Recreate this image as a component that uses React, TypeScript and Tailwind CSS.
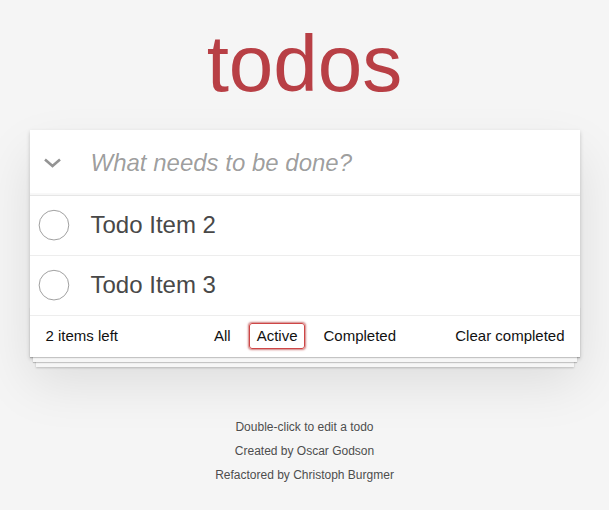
import React from "react";

function Circle() {
  return (
    <svg width="40" height="40" viewBox="-10 -18 100 135" className="shrink-0">
      <circle cx="50" cy="50" r="50" fill="none" stroke="#949494" strokeWidth="3" />
    </svg>
  );
}

export default function App() {
  const items = ["Todo Item 2", "Todo Item 3"];
  return (
    <div className="min-h-screen bg-[#f5f5f5] font-['Liberation_Sans',Arial,sans-serif] text-[14px] text-[#111111] antialiased">
      <div className="w-[550px] mx-auto pt-[24px] pb-[40px]">
        <h1 className="h-[80px] text-[80px] leading-[80px] font-extralight text-center text-[#b83f45] mb-[26px]">
          todos
        </h1>
        <section className="bg-white shadow-[0_2px_4px_0_rgba(0,0,0,0.2),0_25px_50px_0_rgba(0,0,0,0.1)]">
          <header className="relative flex items-center h-[65px] shadow-[inset_0_-2px_1px_rgba(0,0,0,0.03)]">
            <div className="w-[60px] h-[65px] flex items-center justify-center shrink-0">
              <svg width="20" height="12" viewBox="0 0 20 12" className="ml-[-13px] mt-[1px]">
                <polyline points="2,2.5 9.5,9 17,2.5" fill="none" stroke="#949494" strokeWidth="2.6" strokeLinejoin="miter" />
              </svg>
            </div>
            <input
              className="flex-1 h-[65px] pl-[1px] pr-[16px] text-[24px] leading-[1.4] bg-transparent outline-none placeholder:italic placeholder:text-[rgba(0,0,0,0.4)] text-[#484848]"
              placeholder="What needs to be done?"
            />
          </header>
          <ul className="border-t border-[#e6e6e6]">
            {items.map((t) => (
              <li key={t} className="flex items-center border-b border-[#ededed] pl-[1px]">
                <Circle />
                <label className="pl-[20px] pr-[15px] py-[15px] text-[24px] leading-[1.2] text-[#484848]">{t}</label>
              </li>
            ))}
          </ul>
          <footer className="relative h-[41px] px-[15px] py-[10px] text-[15px]">
            <div className="absolute inset-x-0 bottom-0 h-[50px] overflow-hidden shadow-[0_1px_1px_rgba(0,0,0,0.2),0_8px_0_-3px_#f6f6f6,0_9px_1px_-3px_rgba(0,0,0,0.2),0_16px_0_-6px_#f6f6f6,0_17px_2px_-6px_rgba(0,0,0,0.2)]" />
            <div className="relative grid grid-cols-[1fr_auto_1fr] items-center h-[20px] pl-[1px]">
              <span className="justify-self-start leading-[20px]">2 items left</span>
              <div className="flex items-center h-[20px] gap-[4px]">
                <a className="m-[3px] px-[7px] py-[3px] border border-transparent rounded-[3px] leading-[18px]">All</a>
                <a className="m-[3px] px-[7px] py-[3px] border border-[#ce4646] rounded-[3px] leading-[18px] shadow-[0_0_2px_1px_#cf7d7d]">Active</a>
                <a className="m-[3px] px-[7px] py-[3px] border border-transparent rounded-[3px] leading-[18px]">Completed</a>
              </div>
              <span className="justify-self-end leading-[20px]">Clear completed</span>
            </div>
          </footer>
        </section>
        <div className="mt-[64px] flex flex-col items-center gap-[12px] text-[12px] leading-[12px] text-[#4d4d4d] [text-shadow:0_1px_0_rgba(255,255,255,0.5)]">
          <p>Double-click to edit a todo</p>
          <p>Created by Oscar Godson</p>
          <p>Refactored by Christoph Burgmer</p>
        </div>
      </div>
    </div>
  );
}
